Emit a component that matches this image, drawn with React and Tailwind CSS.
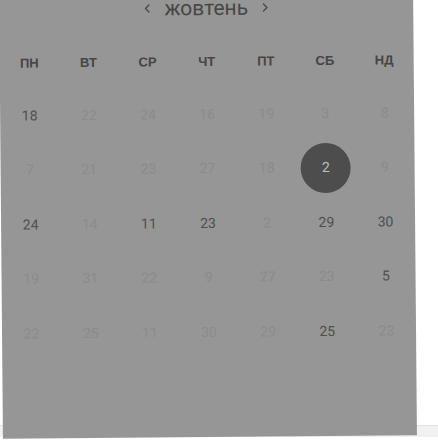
import { ChevronLeft, ChevronRight } from 'lucide-react';

const weekdays = ['ПН', 'ВТ', 'СР', 'ЧТ', 'ПТ', 'СБ', 'НД'];

// d = dark (current month), f = faded, s = selected
const rows = [
  [['18', 'd'], ['22', 'f'], ['24', 'f'], ['16', 'f'], ['19', 'f'], ['3', 'f'], ['8', 'f']],
  [['7', 'f'], ['21', 'f'], ['23', 'f'], ['27', 'f'], ['18', 'f'], ['2', 's'], ['9', 'f']],
  [['24', 'd'], ['14', 'f'], ['11', 'd'], ['23', 'd'], ['2', 'f'], ['29', 'd'], ['30', 'd']],
  [['19', 'f'], ['31', 'f'], ['22', 'f'], ['9', 'f'], ['27', 'f'], ['23', 'f'], ['5', 'd']],
  [['22', 'f'], ['25', 'f'], ['11', 'f'], ['30', 'f'], ['29', 'f'], ['25', 'd'], ['23', 'f']],
];

function DayCell({ value, kind }) {
  if (kind === 's') {
    return (
      <div className="flex items-center justify-center">
        <span className="flex h-[50px] w-[50px] items-center justify-center rounded-full bg-[#4d4d4d] text-[14px] text-[#bdbdbd]">
          {value}
        </span>
      </div>
    );
  }
  return (
    <div className={`flex items-center justify-center text-[14px] ${kind === 'd' ? 'text-[#4f4f4f]' : 'text-[#8b8b8b]'}`}>
      {value}
    </div>
  );
}

export default function App() {
  return (
    <div className="flex h-[447px] w-[438px] flex-col overflow-hidden bg-white" style={{ fontFamily: 'Roboto, "Liberation Sans", sans-serif' }}>
      <div className="relative z-10 ml-[1px] mt-[-10px] h-[447px] w-[414px] shrink-0 -rotate-[0.5deg] bg-[#969696]">
        <div className="flex h-[36px] items-center justify-center gap-[10px] text-[#474747]">
          <ChevronLeft size={14} strokeWidth={2.2} />
          <span className="text-[21px] leading-none">жовтень</span>
          <ChevronRight size={14} strokeWidth={2.2} />
        </div>

        <div className="mt-[22px] grid h-[28px] grid-cols-7">
          {weekdays.map((day) => (
            <div key={day} className="flex items-center justify-center text-[13px] font-bold text-[#454545]" style={{ fontFamily: '"Liberation Sans", Arial, sans-serif' }}>
              {day}
            </div>
          ))}
        </div>

        <div className="mt-[11px]">
          {rows.map((row, i) => (
            <div key={i} className="grid h-[54.5px] grid-cols-7">
              {row.map(([value, kind], j) => (
                <DayCell key={j} value={value} kind={kind} />
              ))}
            </div>
          ))}
        </div>
      </div>
      <div className="mt-[-12px] h-[12px] shrink-0 border-t border-[#e2e2e2] bg-[#f1f1f1]" />
    </div>
  );
}
